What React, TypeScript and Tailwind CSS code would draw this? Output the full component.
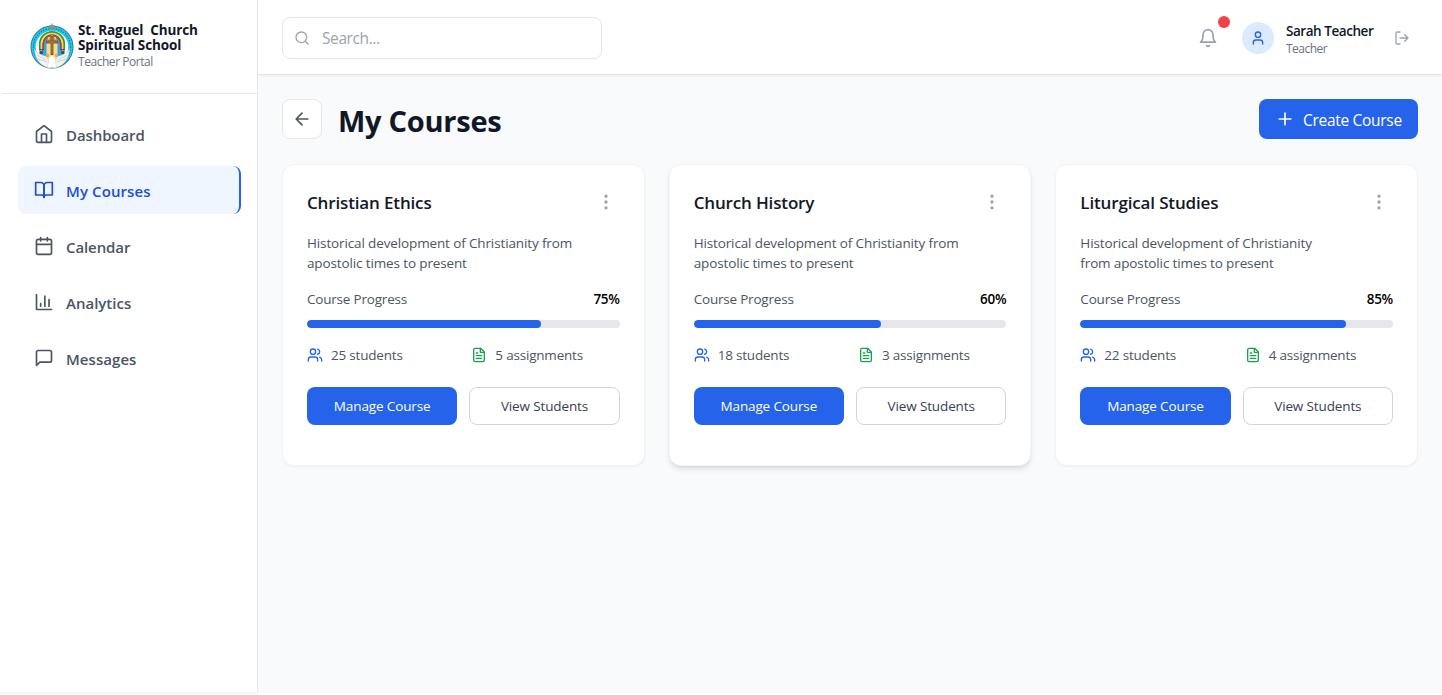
import type { ReactNode } from 'react';

type IconProps = { className?: string; strokeWidth?: number; children: ReactNode };

function Icon({ className = '', strokeWidth = 2, children }: IconProps) {
  return (
    <svg
      viewBox="0 0 24 24"
      fill="none"
      stroke="currentColor"
      strokeWidth={strokeWidth}
      strokeLinecap="round"
      strokeLinejoin="round"
      className={`shrink-0 ${className}`}
    >
      {children}
    </svg>
  );
}

const homeIcon = (
  <>
    <path d="m3 9 9-7 9 7v11a2 2 0 0 1-2 2H5a2 2 0 0 1-2-2z" />
    <path d="M9 22V12h6v10" />
  </>
);
const bookIcon = (
  <>
    <path d="M2 3h6a4 4 0 0 1 4 4v14a3 3 0 0 0-3-3H2z" />
    <path d="M22 3h-6a4 4 0 0 0-4 4v14a3 3 0 0 1 3-3h7z" />
  </>
);
const calendarIcon = (
  <>
    <rect x="3" y="4" width="18" height="18" rx="2" />
    <path d="M16 2v4M8 2v4M3 10h18" />
  </>
);
const chartIcon = <path d="M3 3v18h18M18 17V9M13 17V5M8 17v-3" />;
const messageIcon = <path d="M21 15a2 2 0 0 1-2 2H7l-4 4V5a2 2 0 0 1 2-2h14a2 2 0 0 1 2 2z" />;

const navItems = [
  { label: 'Dashboard', icon: homeIcon, tracking: 'tracking-[-0.1px]' },
  { label: 'My Courses', icon: bookIcon, tracking: 'tracking-[0.1px]', active: true },
  { label: 'Calendar', icon: calendarIcon, tracking: 'tracking-[-0.1px]' },
  { label: 'Analytics', icon: chartIcon, tracking: 'tracking-[0px]' },
  { label: 'Messages', icon: messageIcon, tracking: 'tracking-[0.05px]' },
];

const courses = [
  { title: 'Christian Ethics', lines: ['Historical development of Christianity from', 'apostolic times to present'], progress: 75, students: 25, assignments: 5, raised: false },
  { title: 'Church History', lines: ['Historical development of Christianity from', 'apostolic times to present'], progress: 60, students: 18, assignments: 3, raised: true },
  { title: 'Liturgical Studies', lines: ['Historical development of Christianity', 'from apostolic times to present'], progress: 85, students: 22, assignments: 4, raised: false },
];

function Logo() {
  return (
    <svg viewBox="0 0 44 48" className="h-12 w-11 shrink-0">
      <circle cx="22" cy="25" r="20.8" fill="#fdfdfb" stroke="#2b7f92" strokeWidth="1.4" />
      <circle cx="22" cy="25" r="18.4" fill="none" stroke="#22c6ee" strokeWidth="4.2" />
      <circle cx="22" cy="25" r="18.6" fill="none" stroke="#13708a" strokeWidth="1.3" strokeDasharray="1 1.6" />
      <path d="M9.500 34V22a12.500 12.500 0 0 1 25 0v12z" fill="#2aa9e4" />
      <path d="M9.800 28v-6a12.200 12.200 0 0 1 24.400 0v6" fill="none" stroke="#2d9a3b" strokeWidth="1.800" />
      <path d="M11.500 28v-6a10.500 10.500 0 0 1 21 0v6" fill="none" stroke="#f2e23a" strokeWidth="1.700" />
      <path d="M13.200 28v-6a8.800 8.800 0 0 1 17.600 0v6" fill="none" stroke="#cf3230" strokeWidth="1.700" />
      <path d="M16.500 38V22l2-7h7l2 7v16z" fill="#f4dc96" />
      <path d="M18 18l4-6 4 6v3h-8z" fill="#c99b3e" />
      <path d="M22 14v19M16 20h12" stroke="#7d5424" strokeWidth="2.800" />
      <path d="M22 15v17M17 20h10" stroke="#b78438" strokeWidth="1" />
      <path d="M9.700 27h3v5h-3zM31.300 27h3v5h-3z" fill="#4a4559" />
      <path d="M10.500 28.500h1.400M32.100 28.500h1.400" stroke="#e5dfd8" strokeWidth="1.200" />
      <path d="M4.500 27c3 6 8 5 13 9l3 9.800C12 45.500 5 38 4.500 27zM39.500 27c-3 6-8 5-13 9l-3 9.800C32 45.500 39 38 39.500 27z" fill="#f3f3f1" stroke="#c6cacb" strokeWidth=".6" />
      <path d="M7 33l9 5M8 37l9 3M37 33l-9 5M36 37l-9 3" stroke="#c1c6c9" strokeWidth=".7" />
      <path d="M19 35.500l3-2 3 2 1.500 10h-9z" fill="#fff" stroke="#d7d5cf" strokeWidth=".5" />
      <circle cx="17.500" cy="33.500" r="1.700" fill="#e9a93d" />
      <circle cx="26.500" cy="33.500" r="1.700" fill="#e9a93d" />
      <path d="M20 6h4v-2.500h-4zM22 1.500v7" fill="#a5aaa4" stroke="#858b86" strokeWidth="1.100" />
    </svg>
  );
}

function Sidebar() {
  return (
    <aside className="flex w-[258px] shrink-0 flex-col border-r border-b border-[#e5e7eb] border-b-[#f3f4f6] bg-white pl-0.5 shadow-[0_1px_2px_rgba(0,0,0,0.05)]">
      <div className="flex h-[94px] shrink-0 items-start border-b border-[#e5e7eb] pt-[22px] pl-7">
        <Logo />
        <div className="ml-1 flex flex-col pt-[0.5px]">
          <span className="text-[13.5px] leading-[15px] font-bold tracking-[-0.1px] whitespace-pre text-gray-900">
            {'St. Raguel  Church\nSpiritual School'}
          </span>
          <span className="mt-px text-[12px] leading-4 tracking-[-0.45px] text-[#6b7280]">Teacher Portal</span>
        </div>
      </div>
      <nav className="flex flex-col gap-2 p-4">
        {navItems.map((item) => (
          <a
            key={item.label}
            className={`flex h-12 items-center gap-3 rounded-lg px-4 text-[15px] font-semibold ${item.tracking} ${
              item.active ? 'border-r-2 border-[#2563eb] bg-[#eff6ff] text-[#1d4ed8]' : 'text-[#4b5563]'
            }`}
          >
            <Icon className="size-5">{item.icon}</Icon>
            <span className="pt-0.5">{item.label}</span>
          </a>
        ))}
      </nav>
    </aside>
  );
}

function Header() {
  return (
    <header className="flex h-[75px] shrink-0 items-center border-b border-[#e5e7eb] bg-white px-6 pt-0.5 shadow-[0_1px_2px_rgba(0,0,0,0.05)]">
      <div className="flex h-[42px] w-80 items-center rounded-lg border border-[#e5e7eb] pr-3 pl-[11px]">
        <Icon className="size-4 text-[#9ca3af]"><circle cx="11" cy="11" r="8" /><path d="m21 21-4.300-4.300" /></Icon>
        <span className="ml-3 pt-px text-[15.5px] tracking-[-0.4px] text-[#9ca3af]">Search...</span>
      </div>
      <div className="ml-auto flex items-center">
        <div className="relative mr-6 size-5 text-[#9ca3af]">
          <Icon className="size-5"><path d="M6 8a6 6 0 0 1 12 0c0 7 3 9 3 9H3s3-2 3-9" /><path d="M10.300 21a1.940 1.940 0 0 0 3.400 0" /></Icon>
          <span className="absolute -top-3 left-5 size-3 rounded-full bg-[#ef4444]" />
        </div>
        <div className="flex size-8 items-center justify-center rounded-full bg-[#dbeafe] text-[#2563eb]">
          <Icon className="size-4"><path d="M19 21v-2a4 4 0 0 0-4-4H9a4 4 0 0 0-4 4v2" /><circle cx="12" cy="7" r="4" /></Icon>
        </div>
        <div className="ml-3 flex w-[100px] flex-col pt-0.5">
          <span className="text-[13.500px] leading-5 font-semibold tracking-[-0.45px] whitespace-nowrap text-gray-900">Sarah Teacher</span>
          <span className="text-[12px] leading-4 tracking-[-0.5px] text-[#6b7280]">Teacher</span>
        </div>
        <Icon className="mx-2 size-4 text-[#9ca3af]"><path d="M9 21H5a2 2 0 0 1-2-2V5a2 2 0 0 1 2-2h4M16 17l5-5-5-5M21 12H9" /></Icon>
      </div>
    </header>
  );
}

function CourseCard({ course }: { course: (typeof courses)[number] }) {
  return (
    <article
      className={`flex h-[302px] flex-col rounded-xl border border-[#f3f4f6] bg-white p-6 tracking-[-0.13px] ${
        course.raised ? 'shadow-[0_4px_6px_-1px_rgba(0,0,0,0.1),0_2px_4px_-2px_rgba(0,0,0,0.1)]' : 'shadow-[0_1px_2px_rgba(0,0,0,0.05)]'
      }`}
    >
      <div className="flex h-7 items-center justify-between">
        <h3 className="text-[17px] font-semibold tracking-[-0.15px] text-gray-900">{course.title}</h3>
        <button className="mb-0.5 p-1 text-[#9ca3af]">
          <Icon className="size-5"><circle cx="12" cy="12" r="1" /><circle cx="12" cy="5" r="1" /><circle cx="12" cy="19" r="1" /></Icon>
        </button>
      </div>
      <p className="mt-4 text-[13.5px] leading-5 whitespace-nowrap text-[#4b5563]">
        {course.lines[0]}<br />{course.lines[1]}
      </p>
      <div className="mt-4 flex h-5 items-center justify-between text-[13.5px] leading-5">
        <span className="tracking-[-0.2px] text-[#4b5563]">Course Progress</span>
        <span className="font-semibold tracking-[-0.3px] text-black">{course.progress}%</span>
      </div>
      <div className="mt-[11px] h-2 shrink-0 overflow-hidden rounded-full bg-[#e5e7eb]">
        <div className="h-full rounded-full bg-[#2563eb]" style={{ width: `${course.progress}%` }} />
      </div>
      <div className="mt-4 grid h-5 grid-cols-2 items-center gap-4 text-[13.5px] leading-5 tracking-[-0.2px] text-[#4b5563]">
        <div className="flex items-center gap-2">
          <Icon className="size-4 text-[#2563eb]"><path d="M16 21v-2a4 4 0 0 0-4-4H6a4 4 0 0 0-4 4v2" /><circle cx="9" cy="7" r="4" /><path d="M22 21v-2a4 4 0 0 0-3-3.870M16 3.130a4 4 0 0 1 0 7.750" /></Icon>
          <span className="pt-px">{course.students} students</span>
        </div>
        <div className="flex items-center gap-2">
          <Icon className="size-4 text-[#16a34a]"><path d="M14.500 2H6a2 2 0 0 0-2 2v16a2 2 0 0 0 2 2h12a2 2 0 0 0 2-2V7.500L14.500 2z" /><path d="M14 2v6h6M16 13H8M16 17H8M10 9H8" /></Icon>
          <span className="pt-px">{course.assignments} assignments</span>
        </div>
      </div>
      <div className="mt-[23px] grid grid-cols-2 gap-3 text-[13.5px] tracking-[-0.13px]">
        <button className="h-[38px] rounded-lg bg-[#2563eb] pt-px text-white">Manage Course</button>
        <button className="h-[38px] rounded-lg border border-[#d1d5db] bg-white pt-px text-[#374151]">View Students</button>
      </div>
    </article>
  );
}

export default function App() {
  return (
    <div className="h-[695px] overflow-hidden bg-white font-['Open_Sans','Noto_Sans',sans-serif]">
      <div className="flex h-[693px]">
        <Sidebar />
        <div className="flex min-w-0 flex-1 flex-col bg-[#f9fafb]">
          <Header />
          <main className="flex flex-col px-6 pt-6">
            <div className="flex h-10 items-center">
              <button className="flex size-10 items-center justify-center rounded-lg border border-[#e5e7eb] bg-white text-[#4b5563]">
                <Icon className="size-5"><path d="m12 19-7-7 7-7M19 12H5" /></Icon>
              </button>
              <h1 className="ml-4 pt-1 text-[29px] leading-9 font-bold tracking-[-0.25px] text-gray-900">My Courses</h1>
              <button className="ml-auto flex h-10 w-[159px] items-center gap-2 rounded-lg bg-[#2563eb] px-4 text-[15.5px] tracking-[-0.3px] whitespace-nowrap text-white">
                <Icon className="size-5"><path d="M5 12h14M12 5v14" /></Icon>
                <span className="pt-1">Create Course</span>
              </button>
            </div>
            <div className="mt-[25px] grid grid-cols-3 gap-6">
              {courses.map((course) => <CourseCard key={course.title} course={course} />)}
            </div>
          </main>
        </div>
      </div>
    </div>
  );
}
